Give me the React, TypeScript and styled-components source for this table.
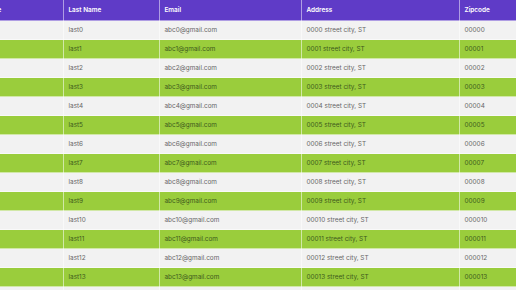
import React from "react";
import styled, { createGlobalStyle } from "styled-components";

const GlobalStyle = createGlobalStyle`
  html, body {
    margin: 0;
    padding: 0;
    background: #f2f2f2;
  }
  body {
    font-family: Inter, "Noto Sans", sans-serif;
  }
`;

interface Person {
  first: string;
  last: string;
  email: string;
  address: string;
  zip: string;
}

const people: Person[] = Array.from({ length: 15 }, (_, i) => ({
  first: `first${i}`,
  last: `last${i}`,
  email: `abc${i}@gmail.com`,
  address: `000${i} street city, ST`,
  zip: `0000${i}`,
}));

const columns = [
  { key: "first", title: "First Name", width: 100 },
  { key: "last", title: "Last Name", width: 96 },
  { key: "email", title: "Email", width: 142 },
  { key: "address", title: "Address", width: 158 },
  { key: "zip", title: "Zipcode", width: 96 },
] as const;

const App = () => {
  return (
    <>
      <GlobalStyle />
      <Viewport>
        <Table>
          <colgroup>
            {columns.map((c) => (
              <col key={c.key} style={{ width: c.width }} />
            ))}
          </colgroup>
          <thead>
            <tr>
              {columns.map((c) => (
                <HeadCell key={c.key}>{c.title}</HeadCell>
              ))}
            </tr>
          </thead>
          <tbody>
            {people.map((p, i) => (
              <Row key={i} $odd={i % 2 === 1}>
                {columns.map((c) => (
                  <Cell key={c.key}>{p[c.key]}</Cell>
                ))}
              </Row>
            ))}
          </tbody>
        </Table>
      </Viewport>
    </>
  );
};

export default App;

const Viewport = styled.div`
  width: 516px;
  height: 290px;
  overflow: hidden;
`;

const Table = styled.table`
  margin-left: -37px;
  border-collapse: collapse;
  table-layout: fixed;
  width: 592px;
  font-size: 6.4px;
`;

const HeadCell = styled.th`
  height: 20px;
  padding: 0 5px;
  background: #5f3bc7;
  color: #ffffff;
  font-weight: 600;
  text-align: left;
  white-space: nowrap;
  border-right: 1px solid rgba(255, 255, 255, 0.5);
  border-bottom: 1px solid rgba(255, 255, 255, 0.5);
`;

const Row = styled.tr<{ $odd: boolean }>`
  background: ${(p) => (p.$odd ? "#9acd3c" : "#f2f2f2")};
  color: ${(p) => (p.$odd ? "#3e5a1c" : "#666666")};
`;

const Cell = styled.td`
  height: 18px;
  padding: 0 5px;
  white-space: nowrap;
  border-right: 1px solid rgba(255, 255, 255, 0.55);
  border-bottom: 1px solid rgba(255, 255, 255, 0.55);
`;
